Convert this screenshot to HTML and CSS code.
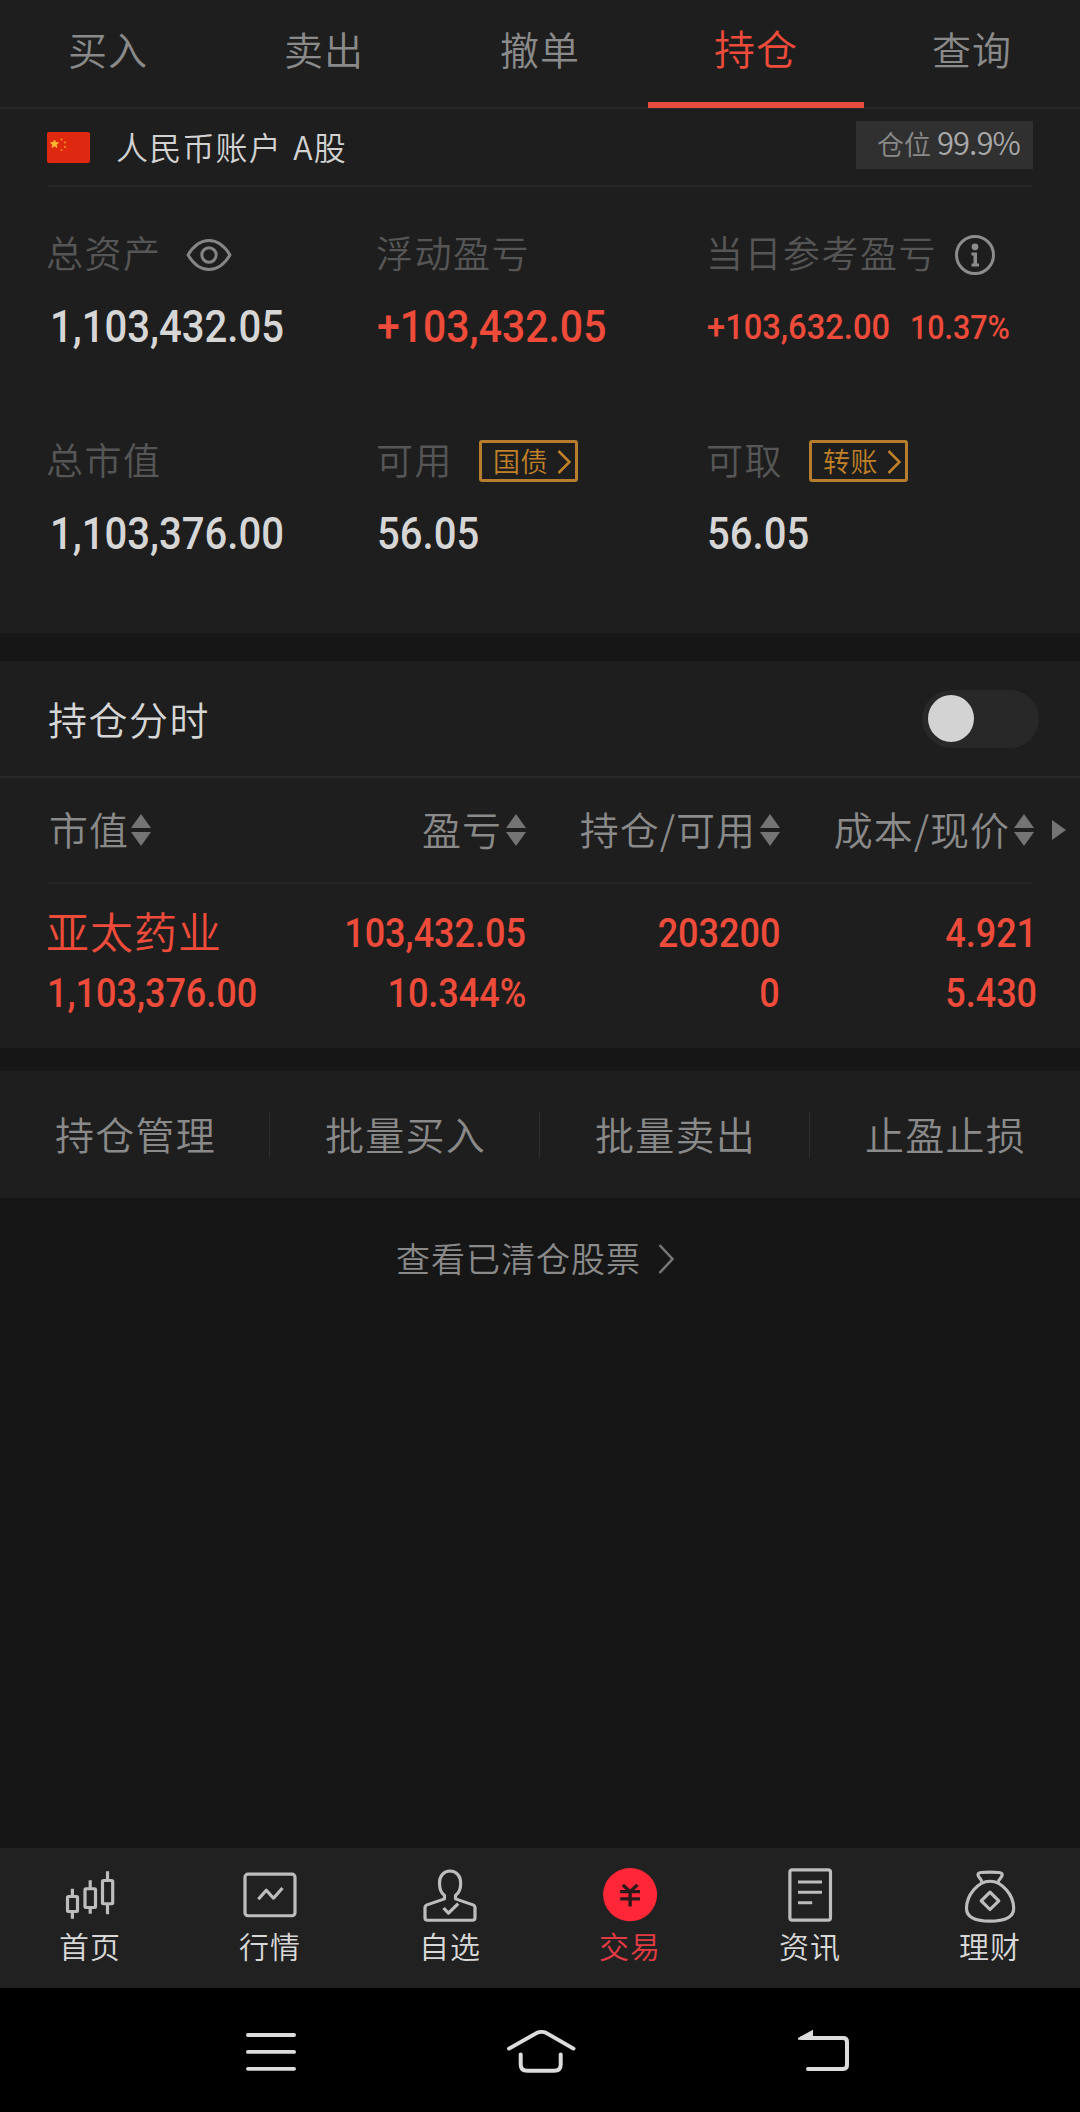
FILE: index.html
```html
<!DOCTYPE html>
<html lang="zh-CN">
<head>
    <meta charset="UTF-8">
    <meta name="viewport" content="width=device-width, initial-scale=1.0">
    <title>持仓</title>
    <link rel="stylesheet" href="styles.css">
</head>
<body>
    <nav class="tabs">
        <a class="tab">买入</a>
        <a class="tab">卖出</a>
        <a class="tab">撤单</a>
        <a class="tab active">持仓</a>
        <a class="tab">查询</a>
    </nav>

    <section class="account">
        <div class="account-bar">
            <svg class="flag" viewBox="0 0 43 31">
                <rect width="43" height="31" rx="2" fill="#de2910"/>
                <path d="M7.5 8l1.1 2.6 2.8.2-2.1 1.8.7 2.8-2.5-1.5-2.4 1.5.6-2.8-2.1-1.8 2.8-.2z" fill="#ffb52e" stroke="#ffb52e"/>
                <g fill="#f08a1d">
                    <circle cx="14.5" cy="7.5" r="1.1"/>
                    <circle cx="18" cy="10.5" r="1.1"/>
                    <circle cx="18" cy="15" r="1.1"/>
                    <circle cx="14.5" cy="18" r="1.1"/>
                </g>
            </svg>
            <span class="account-name">人民币账户 A股</span>
            <span class="position">仓位 <b>99.9%</b></span>
        </div>

        <div class="assets">
            <div class="asset">
                <div class="label">总资产
                    <svg class="eye" viewBox="0 0 46 36">
                        <path d="M2 18C8 8 15 3.5 23 3.5s15 4.5 21 14.5c-6 10-13 14.5-21 14.5S8 28 2 18z"/>
                        <circle cx="23" cy="18" r="7.2"/>
                    </svg>
                </div>
                <div class="value"><span class="num indent">1,103,432.05</span></div>
            </div>
            <div class="asset">
                <div class="label">浮动盈亏</div>
                <div class="value red"><span class="num">+103,432.05</span></div>
            </div>
            <div class="asset">
                <div class="label">当日参考盈亏
                    <svg class="info" viewBox="0 0 42 42">
                        <circle class="ring" cx="21" cy="21" r="18.5"/>
                        <circle cx="21" cy="12.8" r="3.4"/>
                        <path d="M17.5 18.5h5.5v11h2v3h-7.5v-3h2v-8h-2z"/>
                    </svg>
                </div>
                <div class="value small red"><span class="num">+103,632.00</span><span class="num percent">10.37%</span></div>
            </div>
            <div class="asset">
                <div class="label">总市值</div>
                <div class="value"><span class="num indent">1,103,376.00</span></div>
            </div>
            <div class="asset">
                <div class="label">可用
                    <a class="link-btn">国债<svg viewBox="0 0 14 24"><path d="M1.5 1l11 11-11 11"/></svg></a>
                </div>
                <div class="value"><span class="num">56.05</span></div>
            </div>
            <div class="asset">
                <div class="label">可取
                    <a class="link-btn">转账<svg viewBox="0 0 14 24"><path d="M1.5 1l11 11-11 11"/></svg></a>
                </div>
                <div class="value"><span class="num">56.05</span></div>
            </div>
        </div>
    </section>

    <section class="holdings">
        <div class="holdings-title">
            <h2>持仓分时</h2>
            <span class="switch"></span>
        </div>

        <div class="row head">
            <div class="cell">市值<i class="sort"></i></div>
            <div class="cell">盈亏<i class="sort"></i></div>
            <div class="cell">持仓/可用<i class="sort"></i></div>
            <div class="cell">成本/现价<i class="sort"></i></div>
            <i class="more"></i>
        </div>
        <div class="divider"></div>
        <div class="row stock">
            <div class="cell">
                <div class="name">亚太药业</div>
                <div><span class="num">1,103,376.00</span></div>
            </div>
            <div class="cell">
                <div><span class="num">103,432.05</span></div>
                <div><span class="num">10.344%</span></div>
            </div>
            <div class="cell">
                <div><span class="num">203200</span></div>
                <div><span class="num">0</span></div>
            </div>
            <div class="cell">
                <div><span class="num">4.921</span></div>
                <div><span class="num">5.430</span></div>
            </div>
        </div>
    </section>

    <section class="actions">
        <a>持仓管理</a>
        <a>批量买入</a>
        <a>批量卖出</a>
        <a>止盈止损</a>
    </section>

    <a class="cleared">查看已清仓股票<svg viewBox="0 0 16 30"><path d="M1.5 1l13 14-13 14"/></svg></a>

    <footer class="bottom-nav">
        <a class="nav-item">
            <svg viewBox="0 0 60 60" preserveAspectRatio="none">
                <rect x="7.5" y="31.5" width="10" height="15.5" rx="1"/>
                <rect x="25" y="23.5" width="10.5" height="19.5" rx="1"/>
                <rect x="42.5" y="15" width="10.2" height="24" rx="1"/>
                <path d="M12.4 23.5v8M12.4 47v7.5M30.2 14.7v8.8M30.2 43v6.5M47.5 5.5v9.5M47.5 39v11"/>
            </svg>
            <span>首页</span>
        </a>
        <a class="nav-item">
            <svg viewBox="0 0 60 60" preserveAspectRatio="none">
                <rect x="5" y="8.4" width="50" height="43" rx="3"/>
                <path d="M18.3 34.5l8-9.5 7.2 8.3 9-10.5"/>
            </svg>
            <span>行情</span>
        </a>
        <a class="nav-item">
            <svg viewBox="0 0 60 60" preserveAspectRatio="none">
                <path d="M24.5 34v-3.5C21 28 19.500 23.500 19.500 17.500c0-7 4-12.300 10.500-12.300s10.700 5.300 10.700 12.300c0 6-1.700 10.500-5.200 13V34l17.500 6.200q2 .8 2 3V53.500q0 2.600-2.600 2.600H7.500Q5 56.100 5 53.500V43.200q0-2.200 2-3z"/>
                <path d="M23.500 43.500l5 5.300 9.700-9.800"/>
            </svg>
            <span>自选</span>
        </a>
        <a class="nav-item active">
            <svg viewBox="0 0 60 60" preserveAspectRatio="none">
                <ellipse cx="30.1" cy="29.6" rx="27" ry="27.6"/>
                <path d="M22.8 19.5l7.3 7 7.3-7M20.2 26.5h19.8M20.2 34h19.8M30.1 26.5v15.5"/>
            </svg>
            <span>交易</span>
        </a>
        <a class="nav-item">
            <svg viewBox="0 0 60 60" preserveAspectRatio="none">
                <rect x="9.900" y="4" width="40.600" height="52" rx="2.500"/>
                <path d="M18 16.500h24M18 27.200h24M18 38h14.200"/>
            </svg>
            <span>资讯</span>
        </a>
        <a class="nav-item">
            <svg viewBox="0 0 60 60" preserveAspectRatio="none">
                <path d="M22 16.500c-1-3.500-4-5-4-7.500 0-1.500 1-2 3-2.200q9-1 18 0c2 .2 3.200.7 3.200 2.200 0 2.500-2.700 4-4.200 7.500"/>
                <path d="M30 15.700c12.500 0 23.700 15 23.700 28C53.700 54 44 57 30 57S6.500 54 6.500 43.700c0-13 11-28 23.500-28z"/>
                <path d="M30 27l8.800 9-8.800 9-8.800-9z"/>
            </svg>
            <span>理财</span>
        </a>
    </footer>

    <div class="system-bar">
        <svg viewBox="0 0 80 60" preserveAspectRatio="none">
            <path d="M17 14.500h46M17 32h46M17 49.500h46"/>
        </svg>
        <svg viewBox="0 0 80 60" preserveAspectRatio="none">
            <path d="M8 28.500L35.500 12.500q5-2.500 10 0L72.500 28.500M19.700 34.500V45q0 6.500 6.500 6.500h27q6.500 0 6.500-6.500V34.500"/>
        </svg>
        <svg viewBox="0 0 80 60" preserveAspectRatio="none">
            <path class="tip" d="M27 19.500v-2L42 9v10.500z"/>
            <path d="M31 17.600h41q4 0 4 4v24q0 4-4 4H37"/>
        </svg>
    </div>
</body>
</html>
```
FILE: styles.css
```css
* {
    margin: 0;
    padding: 0;
    box-sizing: border-box;
}

body {
    width: 1080px;
    height: 2112px;
    display: flex;
    flex-direction: column;
    background: #161616;
    color: #8a8a8a;
    font-family: 'Noto Sans CJK SC', sans-serif;
    font-weight: 350;
    overflow: hidden;
}

svg {
    fill: none;
    display: block;
    flex: none;
}

/* numbers are drawn in a narrow face */
.num {
    display: inline-block;
    font-weight: 500;
    transform: scaleX(0.9);
    transform-origin: left center;
    white-space: nowrap;
}

/* top tabs */
.tabs {
    display: flex;
    height: 109px;
    background: #1e1e1e;
    border-bottom: 2px solid #282828;
}

.tab {
    flex: 1;
    height: 108px;
    font-size: 39px;
    letter-spacing: 1px;
    line-height: 97px;
    text-align: center;
}

.tab.active {
    color: #ee4b3a;
    font-size: 41px;
    line-height: 94px;
    border-bottom: 6px solid #e54d3f;
}

/* account summary */
.account {
    height: 524px;
    padding: 0 47px;
    background: #1e1e1e;
}

.account-bar {
    height: 78px;
    display: flex;
    align-items: center;
    border-bottom: 2px solid #262626;
}

.flag {
    width: 43px;
    height: 31px;
}

.account-name {
    margin-left: 26px;
    margin-bottom: 2px;
    color: #d2d2d2;
    font-size: 32px;
    letter-spacing: 1.2px;
    word-spacing: 3px;
}

.position {
    width: 177px;
    height: 48px;
    margin-left: auto;
    margin-bottom: 4px;
    padding-left: 21px;
    background: #303030;
    font-size: 27px;
    line-height: 42px;
    white-space: nowrap;
}

.position b {
    color: #a8a8a8;
    font-weight: 350;
    font-size: 31px;
    letter-spacing: -1px;
}

.assets {
    display: grid;
    grid-template-columns: 330px 330px 1fr;
    grid-template-rows: 207px 207px;
    padding-top: 36px;
    margin-right: -40px;
}

.label {
    height: 58px;
    display: flex;
    align-items: center;
    margin-left: -1px;
    color: #565656;
    font-size: 37px;
    letter-spacing: 1.5px;
}

.value {
    height: 93px;
    color: #d6d6d6;
    font-family: Roboto, sans-serif;
    font-size: 44.5px;
    line-height: 93px;
    white-space: nowrap;
}

.value.red {
    color: #ee4b3a;
}

.value.red .num {
    transform: scaleX(0.92);
}

.value.small {
    display: flex;
    align-items: baseline;
    gap: 4px;
    font-size: 35.5px;
}

.indent {
    margin-left: 3px;
}

.value .percent {
    font-size: 33px;
}

.eye {
    width: 46px;
    height: 36px;
    margin-top: 5px;
    margin-left: 24px;
    stroke: #858585;
    stroke-width: 3;
    stroke-linejoin: round;
}

.info {
    width: 42px;
    height: 42px;
    margin-top: 5px;
    margin-left: 17px;
    fill: #8c8c8c;
}

.info .ring {
    fill: none;
    stroke: #8c8c8c;
    stroke-width: 3;
}

.link-btn {
    width: 99px;
    height: 42px;
    margin-top: 4px;
    margin-left: 26px;
    display: flex;
    align-items: center;
    gap: 9px;
    padding-left: 11px;
    padding-bottom: 2px;
    border: 3px solid #b57d2d;
    border-radius: 3px;
    color: #c08128;
    font-size: 27px;
    letter-spacing: 0.5px;
}

.link-btn svg {
    width: 14px;
    height: 24px;
    margin-top: 3px;
    stroke: #c08128;
    stroke-width: 2.5;
}

/* holdings */
.holdings {
    height: 387px;
    margin-top: 28px;
    background: #1e1e1e;
}

.holdings-title {
    height: 117px;
    display: flex;
    align-items: center;
    justify-content: space-between;
    padding: 0 41px 0 48px;
    border-bottom: 2px solid #282828;
}

.holdings-title h2 {
    margin-bottom: 2px;
    color: #d6d6d6;
    font-size: 39px;
    font-weight: 350;
    letter-spacing: 1.5px;
}

.switch {
    width: 117px;
    height: 58px;
    padding: 5px 6px;
    border-radius: 29px;
    background: #282828;
}

.switch::after {
    content: '';
    display: block;
    width: 46px;
    height: 47px;
    border-radius: 50%;
    background: #d3d3d3;
}

.row {
    display: grid;
    grid-template-columns: 230px 249px 254px 254px 1fr;
    padding-left: 47px;
}

.head {
    height: 104px;
    align-items: center;
    padding-bottom: 4px;
    font-size: 39px;
}

.head .cell {
    display: flex;
    align-items: center;
    justify-content: flex-end;
    letter-spacing: 1px;
    white-space: nowrap;
}

.head .cell:first-child {
    justify-content: flex-start;
    padding-left: 2px;
}

.sort {
    width: 20px;
    margin-top: 4px;
    margin-left: 4px;
}

.head .cell:first-child .sort {
    margin-left: 2px;
}

.sort::before,
.sort::after {
    content: '';
    display: block;
    border: 10px solid transparent;
    border-top-width: 0;
    border-bottom: 14px solid #747474;
}

.sort::after {
    margin-top: 4px;
    border-top: 14px solid #747474;
    border-bottom-width: 0;
}

.more {
    margin-top: 3px;
    margin-left: 18px;
    width: 0;
    border: 10px solid transparent;
    border-right-width: 0;
    border-left: 14px solid #747474;
}

.divider {
    height: 2px;
    margin: 0 47px;
    background: #252525;
}

.stock {
    padding-top: 20px;
    color: #ee4b3a;
    font-family: Roboto, sans-serif;
    font-size: 40px;
    line-height: 60px;
}

.stock .cell {
    text-align: right;
}

.stock .num {
    transform-origin: right center;
}

.stock .cell:first-child {
    text-align: left;
}

.stock .cell:first-child .num {
    transform-origin: left center;
}

.stock .cell:last-child {
    margin-right: -3px;
}

.stock .name {
    height: 60px;
    margin-left: -1px;
    font-family: 'Noto Sans CJK SC', sans-serif;
    font-size: 43px;
    letter-spacing: 1px;
    line-height: 53px;
}

/* batch actions */
.actions {
    height: 127px;
    margin-top: 23px;
    display: flex;
    align-items: center;
    background: #1e1e1e;
}

.actions a {
    flex: 1;
    height: 47px;
    padding-left: 2px;
    border-right: 1px solid #2e2e2e;
    font-size: 39px;
    letter-spacing: 1.2px;
    line-height: 44px;
    text-align: center;
}

.actions a:last-child {
    border-right-color: transparent;
}

.cleared {
    height: 118px;
    display: flex;
    align-items: center;
    justify-content: center;
    gap: 17px;
    padding-right: 10px;
    font-size: 34px;
    letter-spacing: 1px;
}

.cleared svg {
    width: 16px;
    height: 30px;
    margin-top: 4px;
    stroke: #777;
    stroke-width: 2.5;
}

/* bottom navigation */
.bottom-nav {
    height: 140px;
    margin-top: auto;
    display: flex;
    background: #212121;
}

.nav-item {
    flex: 1;
    display: flex;
    flex-direction: column;
    align-items: center;
    padding-top: 18px;
    color: #d8d8d8;
    font-size: 30px;
    letter-spacing: 1px;
    line-height: 42px;
}

.nav-item svg {
    width: 60px;
    height: 58px;
    stroke: #bdbdbd;
    stroke-width: 3.2;
    stroke-linejoin: round;
}

.nav-item.active {
    color: #e23b43;
}

.nav-item.active ellipse {
    fill: #ff2638;
    stroke: none;
}

.nav-item.active path {
    stroke: #2b1a1c;
    stroke-width: 3.4;
}

.system-bar {
    height: 124px;
    display: grid;
    grid-template-columns: repeat(3, 270px);
    justify-items: center;
    padding: 33px 0 0 136px;
    background: #000;
}

.system-bar svg {
    width: 80px;
    height: 58px;
    stroke: #dcdcdc;
    stroke-width: 4;
    stroke-linecap: round;
}

.system-bar .tip {
    fill: #dcdcdc;
    stroke: none;
}
```
